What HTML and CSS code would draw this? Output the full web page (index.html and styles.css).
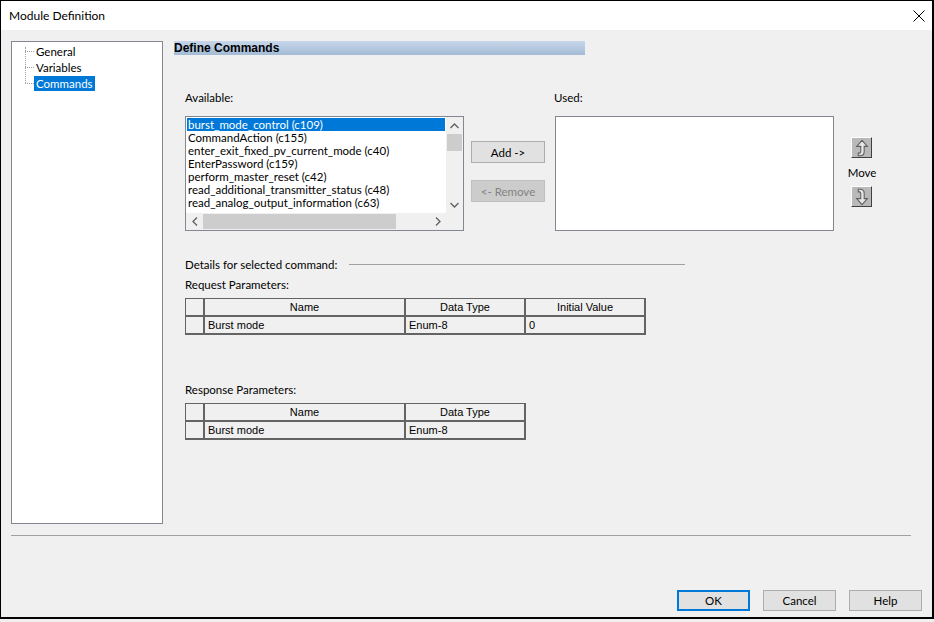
FILE: index.html
```html
<!DOCTYPE html>
<html lang="en">
<head>
  <meta charset="UTF-8">
  <title>Module Definition</title>
  <link rel="stylesheet" href="styles.css">
</head>
<body>
  <div class="window">
    <div class="titlebar">
      <span class="title">Module Definition</span>
      <svg class="close" width="12" height="12" viewBox="0 0 12 12">
        <path d="M0.5 0.5 L11.5 11.5 M11.5 0.5 L0.5 11.5" stroke="#000" stroke-width="1" fill="none"/>
      </svg>
    </div>

    <div class="client">
      <div class="main">
        <div class="tree">
          <ul>
            <li><span class="branch"></span><span class="node">General</span></li>
            <li><span class="branch"></span><span class="node">Variables</span></li>
            <li><span class="branch"></span><span class="node selected">Commands</span></li>
          </ul>
        </div>

        <div class="page">
          <div class="page-title">Define Commands</div>

          <div class="section">
            <div class="pickers">
              <div class="picker">
                <div class="label">Available:</div>
                <div class="listbox">
                  <div class="items">
                    <div class="item selected">burst_mode_control (c109)</div>
                    <div class="item">CommandAction (c155)</div>
                    <div class="item">enter_exit_fixed_pv_current_mode (c40)</div>
                    <div class="item">EnterPassword (c159)</div>
                    <div class="item">perform_master_reset (c42)</div>
                    <div class="item">read_additional_transmitter_status (c48)</div>
                    <div class="item">read_analog_output_information (c63)</div>
                  </div>
                  <div class="vscroll">
                    <div class="arrow">
                      <svg width="9" height="6" viewBox="0 0 9 6"><polyline points="0.5,5 4.5,1 8.5,5" fill="none" stroke="#606060" stroke-width="1.3"/></svg>
                    </div>
                    <div class="vthumb"></div>
                    <div class="track"></div>
                    <div class="arrow">
                      <svg width="9" height="6" viewBox="0 0 9 6"><polyline points="0.5,1 4.5,5 8.5,1" fill="none" stroke="#606060" stroke-width="1.3"/></svg>
                    </div>
                  </div>
                  <div class="hscroll">
                    <div class="arrow">
                      <svg width="6" height="9" viewBox="0 0 6 9"><polyline points="5,0.5 1,4.5 5,8.5" fill="none" stroke="#606060" stroke-width="1.3"/></svg>
                    </div>
                    <div class="hthumb"></div>
                    <div class="track"></div>
                    <div class="arrow">
                      <svg width="6" height="9" viewBox="0 0 6 9"><polyline points="1,0.5 5,4.5 1,8.5" fill="none" stroke="#606060" stroke-width="1.3"/></svg>
                    </div>
                  </div>
                  <div class="corner"></div>
                </div>
              </div>

              <div class="transfer">
                <button class="btn">Add -&gt;</button>
                <button class="btn" disabled>&lt;- Remove</button>
              </div>

              <div class="picker used">
                <div class="label">Used:</div>
                <div class="listbox empty"></div>
              </div>

              <div class="move">
                <div class="move-btn">
                  <svg width="15" height="18" viewBox="0 0 14 16">
                    <path d="M7.5 0.8 L12.5 6.5 L9.5 6.5 L9.5 11.5 Q9.5 15.2 5.5 15.2 L4 15.2 L4 12.8 L5.2 12.8 Q6.3 12.8 6.3 11.5 L6.3 6.5 L2.5 6.5 Z" fill="#e6e6e6" stroke="#5e5e5e" stroke-width="1"/>
                  </svg>
                </div>
                <div class="move-label">Move</div>
                <div class="move-btn">
                  <svg width="15" height="18" viewBox="0 0 14 16">
                    <path d="M7.5 15.2 L12.5 9.5 L9.5 9.5 L9.5 4.5 Q9.5 0.8 5.5 0.8 L4 0.8 L4 3.2 L5.2 3.2 Q6.3 3.2 6.3 4.5 L6.3 9.5 L2.5 9.5 Z" fill="#e6e6e6" stroke="#5e5e5e" stroke-width="1"/>
                  </svg>
                </div>
              </div>
            </div>

            <div class="details">
              <span>Details for selected command:</span>
              <span class="rule"></span>
            </div>

            <div class="label group">Request Parameters:</div>
            <table class="grid">
              <tr class="head">
                <td class="rowhead"></td>
                <td class="c-name">Name</td>
                <td class="c-type">Data Type</td>
                <td class="c-init">Initial Value</td>
              </tr>
              <tr>
                <td class="rowhead"></td>
                <td>Burst mode</td>
                <td>Enum-8</td>
                <td>0</td>
              </tr>
            </table>

            <div class="label group response">Response Parameters:</div>
            <table class="grid">
              <tr class="head">
                <td class="rowhead"></td>
                <td class="c-name">Name</td>
                <td class="c-type">Data Type</td>
              </tr>
              <tr>
                <td class="rowhead"></td>
                <td>Burst mode</td>
                <td>Enum-8</td>
              </tr>
            </table>
          </div>
        </div>
      </div>

      <div class="separator"></div>

      <div class="footer">
        <button class="btn default">OK</button>
        <button class="btn">Cancel</button>
        <button class="btn">Help</button>
      </div>
    </div>
  </div>
</body>
</html>
```

FILE: styles.css
```css
html, body {
  margin: 0;
  padding: 0;
  background: #f0f0f0;
}

body {
  font-family: "Segoe UI", Lato, "Noto Sans", sans-serif;
  font-size: 11.5px;
  color: #000;
}

.window {
  width: 934px;
  height: 619px;
  box-sizing: border-box;
  border-left: 1px solid #000;
  border-top: 1px solid #000;
  border-right: 2px solid #000;
  border-bottom: 2px solid #000;
  display: flex;
  flex-direction: column;
  background: #f0f0f0;
}

.titlebar {
  height: 29px;
  background: #fff;
  display: flex;
  align-items: center;
  justify-content: space-between;
  padding: 0 7px 0 8px;
}

.title {
  font-size: 12px;
}

.client {
  flex: 1;
  display: flex;
  flex-direction: column;
  padding: 11px 0 0 10px;
}

.main {
  display: flex;
}

/* tree on the left */
.tree {
  width: 152px;
  height: 483px;
  box-sizing: border-box;
  border: 1px solid #828790;
  background: #fff;
}

.tree ul {
  list-style: none;
  margin: 1px 0 0 0;
  padding: 0 0 0 13px;
  position: relative;
}

.tree ul:before {
  content: "";
  position: absolute;
  left: 13px;
  top: 4px;
  height: 36px;
  border-left: 1px dotted #a0a0a0;
}

.tree li {
  display: flex;
  align-items: center;
  height: 16px;
}

.tree .branch {
  width: 9px;
  border-top: 1px dotted #a0a0a0;
}

.tree .node {
  padding: 0 2px;
  line-height: 15px;
}

.tree .node.selected {
  background: #0078d7;
  color: #fff;
}

/* right page */
.page {
  margin-left: 11px;
}

.page-title {
  width: 411px;
  height: 14px;
  line-height: 14px;
  font-family: "Liberation Sans", Arial, sans-serif;
  font-weight: bold;
  font-size: 12px;
  background: linear-gradient(to bottom, #c8d7ea, #a3bbd6);
}

.section {
  padding-left: 11px;
}

.label {
  height: 14px;
  line-height: 14px;
}

.pickers {
  display: flex;
  align-items: flex-start;
  margin-top: 36px;
}

.picker .label {
  margin-bottom: 11px;
}

.listbox {
  width: 279px;
  height: 115px;
  box-sizing: border-box;
  border: 1px solid #828790;
  background: #fff;
  display: grid;
  grid-template-columns: 1fr 17px;
  grid-template-rows: 1fr 17px;
}

.listbox.empty {
  display: block;
}

.items {
  padding: 1px 1px 0 1px;
  overflow: hidden;
}

.item {
  height: 13px;
  line-height: 13px;
  padding-left: 1px;
  white-space: nowrap;
}

.item.selected {
  background: #0078d7;
  color: #fff;
}

.vscroll {
  display: flex;
  flex-direction: column;
  background: #f0f0f0;
}

.hscroll {
  display: flex;
  background: #f0f0f0;
}

.arrow {
  width: 17px;
  height: 17px;
  display: flex;
  align-items: center;
  justify-content: center;
  flex: none;
}

.vthumb {
  height: 17px;
  margin: 0 1px;
  background: #cdcdcd;
}

.hthumb {
  width: 193px;
  margin: 1px 0;
  background: #cdcdcd;
}

.track {
  flex: 1;
}

.corner {
  background: #f0f0f0;
}

.transfer {
  display: flex;
  flex-direction: column;
  margin-left: 7px;
  padding-top: 50px;
}

.btn {
  font-family: "Segoe UI", Lato, "Noto Sans", sans-serif;
  font-size: 11.5px;
  color: #000;
  background: #e1e1e1;
  border: 1px solid #adadad;
  padding: 0;
  width: 74px;
  height: 22px;
}

.transfer .btn + .btn {
  margin-top: 17px;
}

.btn:disabled {
  background: #cccccc;
  border-color: #bfbfbf;
  color: #838383;
}

.used {
  margin-left: 10px;
}

.used .label {
  margin-left: -1px;
}

.move {
  width: 26px;
  margin-left: 14px;
  padding-top: 46px;
  display: flex;
  flex-direction: column;
  align-items: center;
}

.move-btn {
  width: 21px;
  height: 21px;
  box-sizing: border-box;
  background: #b9b9b9;
  border-top: 1px solid #fff;
  border-left: 1px solid #fff;
  border-right: 1px solid #404040;
  border-bottom: 1px solid #404040;
  display: flex;
  align-items: center;
  justify-content: center;
}

.move-label {
  height: 14px;
  line-height: 14px;
  margin: 8px 0 6px;
  padding-left: 2px;
}

.details {
  display: flex;
  align-items: center;
  width: 500px;
  height: 14px;
  margin-top: 26px;
}

.details .rule {
  flex: 1;
  margin-left: 12px;
  border-top: 1px solid #a0a0a0;
}

.group {
  margin-top: 7px;
}

.group.response {
  margin-top: 48px;
}

/* parameter grids */
.grid {
  margin-top: 6px;
  border-collapse: separate;
  border-spacing: 0;
  border-left: 1px solid #646464;
  border-top: 1px solid #646464;
  font-family: "Liberation Sans", Arial, sans-serif;
  font-size: 11px;
}

.grid td {
  height: 18px;
  padding: 0 0 0 3px;
  box-sizing: border-box;
  border-right: 2px solid #646464;
  border-bottom: 2px solid #646464;
  background: #f0f0f0;
  white-space: nowrap;
}

.grid .head td {
  text-align: center;
  padding: 0;
}

.grid td.rowhead {
  width: 19px;
  padding: 0;
}

.grid .c-name {
  width: 201px;
}

.grid .c-type {
  width: 120px;
}

.grid .c-init {
  width: 120px;
}

.separator {
  width: 900px;
  margin-top: 11px;
  border-top: 1px solid #a0a0a0;
}

.footer {
  display: flex;
  justify-content: flex-end;
  gap: 13px;
  margin-top: 54px;
  padding-right: 10px;
}

.footer .btn {
  width: 73px;
  height: 21px;
}

.footer .btn.default {
  border: 2px solid #0078d7;
}
```
